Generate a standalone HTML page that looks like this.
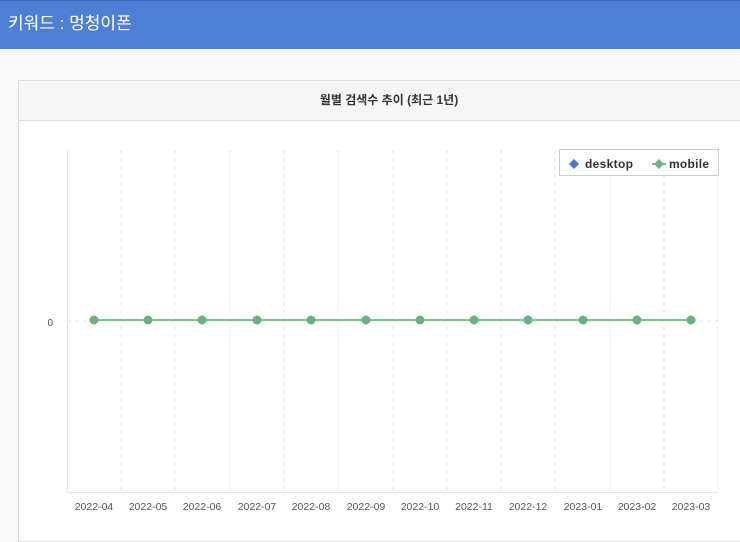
<!DOCTYPE html>
<html><head><meta charset="utf-8"><style>
body{margin:0;width:740px;height:529px;overflow:hidden;background:#f8f8f8;font-family:"Liberation Sans","Noto Sans CJK KR",sans-serif;}
.hdr{position:absolute;left:0;top:0;width:740px;height:49px;background:#4f7fd4;border-top:1px solid #3d6cc0;box-sizing:border-box;color:#fff;font-size:17px;line-height:46px;padding-left:8px;}
.card{position:absolute;left:18px;top:80px;width:740px;height:460px;background:#fff;border:1px solid #dcdcdc;}
.ch{height:39px;background:#f6f6f6;border-bottom:1px solid #dcdcdc;text-align:center;font-size:12px;line-height:39px;color:#333;font-weight:bold;}
</style></head><body>
<div class="hdr">키워드 : 멍청이폰</div>
<div class="card"><div class="ch">월별 검색수 추이 (최근 1년)</div></div>
<svg style="position:absolute;left:0;top:0" width="740" height="529">
<g stroke="#e6e6e6" stroke-dasharray="4,4">
<line x1="121" y1="150" x2="121" y2="492"/><line x1="175" y1="150" x2="175" y2="492"/><line x1="230" y1="150" x2="230" y2="492"/><line x1="284" y1="150" x2="284" y2="492"/><line x1="338" y1="150" x2="338" y2="492"/><line x1="393" y1="150" x2="393" y2="492"/><line x1="447" y1="150" x2="447" y2="492"/><line x1="501" y1="150" x2="501" y2="492"/><line x1="555" y1="150" x2="555" y2="492"/><line x1="610" y1="150" x2="610" y2="492"/><line x1="664" y1="150" x2="664" y2="492"/><line x1="718" y1="150" x2="718" y2="492"/>
<line x1="67" y1="321" x2="718" y2="321"/>
</g>
<line x1="67.5" y1="150" x2="67.5" y2="492" stroke="#e6e6e6"/>
<line x1="67" y1="492.5" x2="718" y2="492.5" stroke="#e6e6e6"/>
<text x="53" y="326" font-size="10" fill="#555" text-anchor="end" font-family="Liberation Sans">0</text>
<line x1="94" y1="320" x2="691" y2="320" stroke="#7cc48a" stroke-width="2"/>
<g fill="#6ab27e">
<circle cx="94" cy="320" r="4.5"/><circle cx="148" cy="320" r="4.5"/><circle cx="202" cy="320" r="4.5"/><circle cx="257" cy="320" r="4.5"/><circle cx="311" cy="320" r="4.5"/><circle cx="366" cy="320" r="4.5"/><circle cx="420" cy="320" r="4.5"/><circle cx="474" cy="320" r="4.5"/><circle cx="528" cy="320" r="4.5"/><circle cx="583" cy="320" r="4.5"/><circle cx="637" cy="320" r="4.5"/><circle cx="691" cy="320" r="4.5"/>
</g>
<g font-size="10.5" fill="#555" text-anchor="middle" font-family="Liberation Sans">
<text x="94" y="510">2022-04</text><text x="148" y="510">2022-05</text><text x="202" y="510">2022-06</text><text x="257" y="510">2022-07</text><text x="311" y="510">2022-08</text><text x="366" y="510">2022-09</text><text x="420" y="510">2022-10</text><text x="474" y="510">2022-11</text><text x="528" y="510">2022-12</text><text x="583" y="510">2023-01</text><text x="637" y="510">2023-02</text><text x="691" y="510">2023-03</text>
</g>
<rect x="559.5" y="149.5" width="159" height="26" fill="#fff" stroke="#ccc"/>
<polygon points="574,159 579,164 574,169 569,164" fill="#4a78d0"/><circle cx="574" cy="164" r="3.5" fill="#4a78d0"/>
<line x1="652" y1="164" x2="666" y2="164" stroke="#7cc48a" stroke-width="2"/>
<polygon points="659,159 664,164 659,169 654,164" fill="#6ab27e"/>
<text x="585" y="168" font-size="12" font-weight="bold" fill="#333" font-family="Liberation Sans" textLength="48">desktop</text>
<text x="669" y="168" font-size="12" font-weight="bold" fill="#333" font-family="Liberation Sans" textLength="40">mobile</text>
</svg>
</body></html>
